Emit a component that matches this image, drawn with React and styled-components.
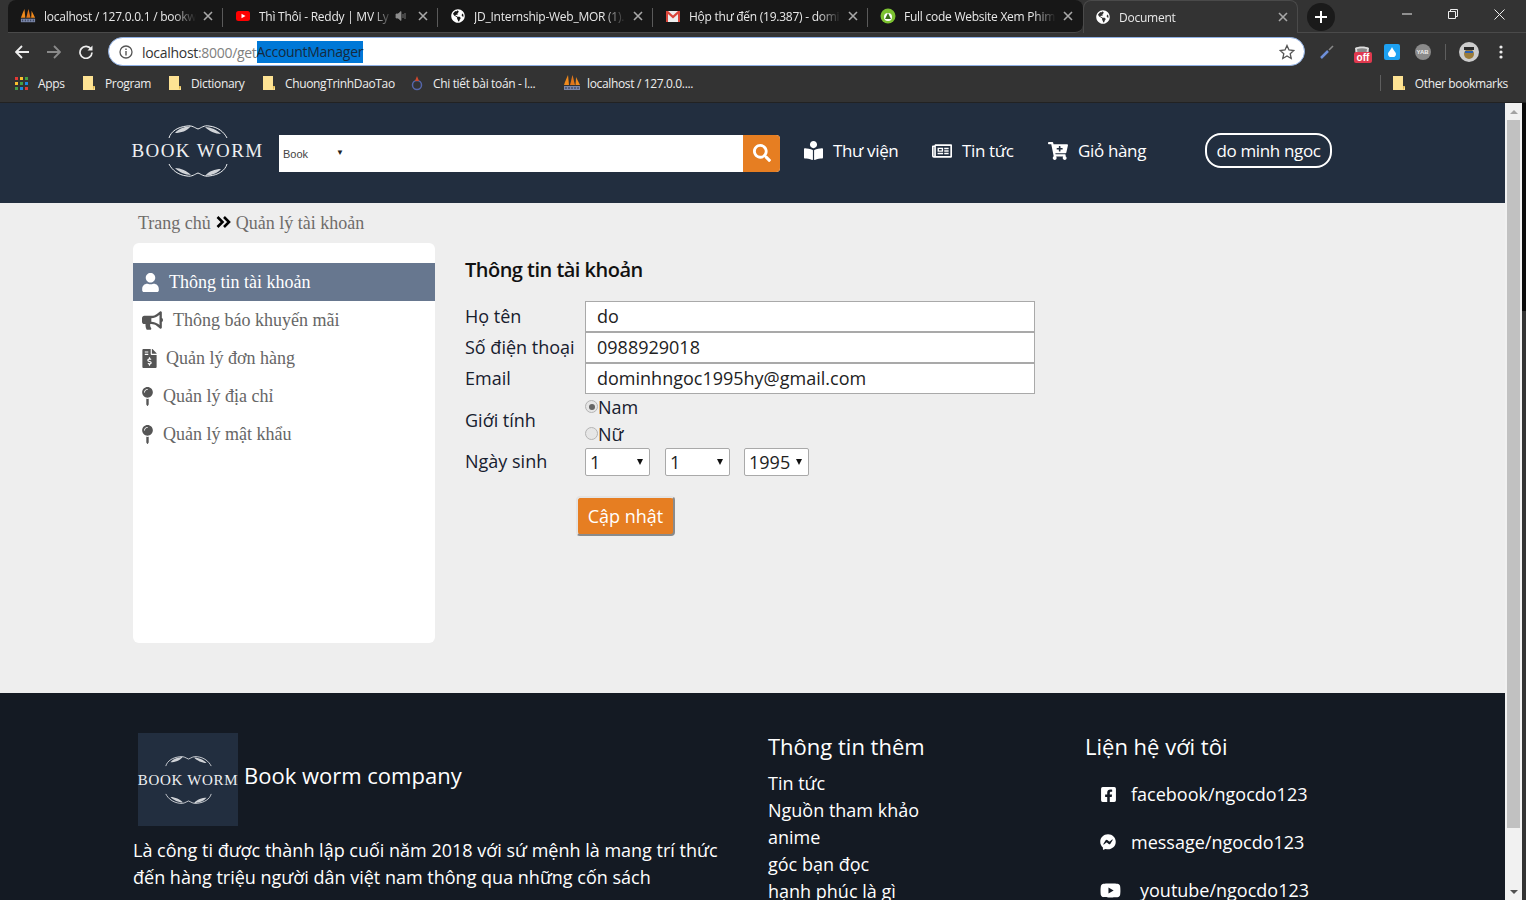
import React from 'react';
import styled, { createGlobalStyle } from 'styled-components';
import {
  FaUser, FaBullhorn, FaFileInvoiceDollar, FaMapPin, FaBookReader, FaRegNewspaper, FaCartPlus,
  FaFacebookSquare, FaFacebookMessenger, FaYoutube, FaSearch, FaGlobeAmericas,
} from 'react-icons/fa';

const Global = createGlobalStyle`
  html, body { margin: 0; padding: 0; height: 900px; overflow: hidden; background: #333; }
  * { box-sizing: border-box; }
`;

const Shell = styled.div`
  width: 1526px; height: 900px; display: flex; flex-direction: column; overflow: hidden;
  font-family: "Open Sans", "Noto Sans", sans-serif;
`;

/* ---------- browser chrome ---------- */
const TabStrip = styled.div`
  height: 33px; flex: none; display: flex; background: #333; padding-left: 8px; position: relative;
  color: #e8e8e8; font-size: 12px; letter-spacing: -0.25px;
`;
const Tab = styled.div`
  width: 215px; height: 33px; display: flex; align-items: center; padding: ${p => (p.$active ? '0 6px 0 11px' : '0 7px 0 12px')};
  flex: none; position: relative;
  background: ${p => (p.$active ? '#333' : '#171717')};
  border-radius: ${p => (p.$active ? '8px 8px 0 0' : '0')};
  ${p => (p.$active ? 'border: 1px solid #4a4a4a; border-bottom: none;' : 'border-bottom: 1px solid #4a4a4a;')}
  ${p => (p.$first ? 'border-top-left-radius: 8px;' : '')}
  ${p => (p.$last ? 'border-top-right-radius: 8px; border-bottom-right-radius: 8px;' : '')}
`;
const TabSep = styled.span`
  position: absolute; right: 0; top: 8px; width: 1px; height: 19px; background: #5a5a5a;
`;
const Fav = styled.span`
  width: 16px; height: 16px; flex: none; display: flex; align-items: center; justify-content: center; color: #fff;
`;
const TabTitle = styled.span`
  margin-left: 8px; flex: 1; min-width: 0; white-space: nowrap; overflow: hidden;
  -webkit-mask-image: linear-gradient(to right, #000 85%, transparent 100%);
  mask-image: linear-gradient(to right, #000 85%, transparent 100%);
`;
const TabClose = styled.span`
  width: 16px; flex: none; display: flex; justify-content: center; margin-left: 4px;
`;
const Speaker = styled.svg`
  width: 12px; height: 12px; flex: none; margin-left: 2px; margin-right: 4px;
`;
const NewTab = styled.div`
  width: 28px; height: 28px; border-radius: 50%; background: #1a1a1a; margin: 3px 0 0 9px;
  display: flex; align-items: center; justify-content: center;
`;
const WindowControls = styled.div`
  margin-left: auto; margin-right: 4px; display: flex; width: 138px; height: 28px;
  align-items: center;
`;
const WinBtn = styled.div`
  width: 46px; height: 28px; display: flex; align-items: center; justify-content: center;
`;
const StripEnd = styled.div`
  flex: 1; height: 33px; display: flex; border-bottom: 1px solid #4a4a4a;
`;

const Toolbar = styled.div`
  height: 37px; flex: none; background: #333; display: flex; align-items: center; padding-left: 8px;
`;
const NavBtn = styled.div`
  width: 28px; height: 28px; margin-right: 4px; display: flex; align-items: center; justify-content: center;
`;
const Omni = styled.div`
  width: 1197px; height: 29px; margin-left: 4px; flex: none; background: #fff; border-radius: 15px;
  border: 1px solid #8fb0e4; display: flex; align-items: center; padding: 1px 9px 0 10px;
  font-size: 14px; letter-spacing: -0.3px; color: #333;
`;
const UrlHost = styled.span`
  margin-left: 9px;
`;
const UrlMuted = styled.span`
  color: #808080;
`;
const UrlSelected = styled.span`
  background: #0078d7; color: #152a3e; line-height: 22px; height: 22px;
`;
const StarWrap = styled.span`
  margin-left: auto; display: flex;
`;
const Extensions = styled.div`
  display: flex; align-items: center; height: 28px; margin-left: 12px; flex: 1;
`;
const ExtSlot = styled.div`
  width: ${p => p.$w}px; padding-left: ${p => p.$pl || 0}px; flex: none; display: flex; align-items: center; justify-content: center; position: relative; height: 28px;
`;
const OffBadge = styled.span`
  position: absolute; left: 17px; top: 14px; height: 11px; width: 18px; background: #e0394e; border-radius: 2px;
  font: bold 10px/11px "Liberation Sans", sans-serif; color: #fff; text-align: center;
`;
const DropBox = styled.span`
  width: 16px; height: 16px; flex: none; border-radius: 2px; background: #1da1f2; display: flex; align-items: center; justify-content: center;
`;
const YabDot = styled.span`
  width: 16px; height: 16px; flex: none; border-radius: 50%; background: #8a8a8a; color: #eee;
  font: bold 6px/16px "Liberation Sans", sans-serif; text-align: center;
`;
const ToolSep = styled.span`
  width: 1px; height: 16px; background: #5e5e5e; flex: none;
`;
const Avatar = styled.span`
  width: 20px; height: 20px; flex: none; border-radius: 50%; background: #ccc; overflow: hidden; display: block;
`;

const Bookmarks = styled.div`
  height: 33px; flex: none; background: #333; border-bottom: 1px solid #222; display: flex; align-items: center;
  padding: 0 18px 6px 15px; color: #eee; font-size: 12px; letter-spacing: -0.35px; white-space: nowrap;
`;
const Bookmark = styled.div`
  display: flex; align-items: center; width: ${p => p.$w}px; flex: none;
`;
const BmLabel = styled.span`
  margin-left: ${p => p.$gap || 10}px;
`;
const BmRight = styled.div`
  margin-left: auto; display: flex; align-items: center;
`;
const BmSep = styled.span`
  width: 1px; height: 16px; background: #5e5e5e; margin-right: 12px;
`;

/* ---------- viewport ---------- */
const Viewport = styled.div`
  flex: 1; min-height: 0; display: flex; overflow: hidden;
`;
const Page = styled.div`
  width: 1505px; flex: none; background: #eee; overflow: hidden; display: flex; flex-direction: column;
`;
const Scrollbar = styled.div`
  width: 17px; flex: none; background: #f1f1f1; display: flex; flex-direction: column; align-items: center;
`;
const ScrollBtn = styled.div`
  height: 17px; width: 100%; flex: none; display: flex; align-items: center; justify-content: center;
`;
const Thumb = styled.div`
  width: 13px; margin: 0 auto; height: 708px; flex: none; background: #c1c1c1;
`;
const ScrollFill = styled.div`
  flex: 1;
`;
const ArrowUp = styled.span`
  width: 0; height: 0; border-left: 4px solid transparent; border-right: 4px solid transparent;
  border-bottom: 4px solid #a3a3a3;
`;
const ArrowDown = styled.span`
  width: 0; height: 0; border-left: 4px solid transparent; border-right: 4px solid transparent;
  border-top: 4px solid #505050;
`;
const EdgeStrip = styled.div`
  width: 4px; flex: none; background: linear-gradient(to bottom, #0a0a0a 0, #0a0a0a 208px, #333 208px);
`;

/* ---------- site header ---------- */
const Header = styled.header`
  height: 100px; flex: none; background: #222e3f; display: flex; align-items: center; padding-left: 132px; color: #fff;
`;
const LogoBox = styled.div`
  width: ${p => p.$w}px; margin-bottom: ${p => p.$mb || 0}px; flex: none; display: flex; flex-direction: column; align-items: center; color: #eef0f2;
`;
const Wreath = styled.svg`
  width: ${p => p.$w}px; height: ${p => p.$h}px; display: block; flex: none;
  ${p => (p.$flip ? 'transform: scale(-1, -1);' : '')}
`;
const LogoText = styled.span`
  font-family: "Liberation Serif", serif; font-size: ${p => p.$size}px; line-height: ${p => p.$lh}px;
  letter-spacing: ${p => p.$ls}px; margin: ${p => p.$gap}px 0; white-space: nowrap;
`;
const SearchBar = styled.div`
  width: 501px; height: 37px; margin-left: 16px; flex: none; background: #fff; display: flex; align-items: stretch; border-radius: 0 4px 4px 0;
`;
const SearchSelect = styled.div`
  width: 68px; display: flex; align-items: center; padding-left: 4px; font: 11px "Liberation Sans", sans-serif; color: #444; margin-top: 1px;
`;
const SmallCaret = styled.span`
  font-size: 8px; color: #222; margin-left: 28px; margin-top: -3px;
`;
const SearchInput = styled.div`
  flex: 1;
`;
const SearchBtn = styled.div`
  width: 37px; background: #e67e22; border-radius: 0 4px 4px 0; display: flex; align-items: center; justify-content: center; color: #fff;
`;
const HeaderNav = styled.nav`
  display: flex; margin: 0 0 5px 24px; align-items: center; height: 35px;
`;
const NavItem = styled.div`
  display: flex; align-items: center; width: ${p => p.$w}px; font-size: 17px; letter-spacing: -0.35px; color: #fff; white-space: nowrap;
`;
const NavIcon = styled.span`
  width: ${p => p.$w}px; flex: none; display: flex;
`;
const UserPill = styled.div`
  margin: 0 0 6px 41px; width: 127px; height: 35px; border: 2px solid #fff; border-radius: 16px; display: flex; align-items: center; justify-content: center;
  font-size: 17px; letter-spacing: -0.35px; white-space: nowrap;
`;

/* ---------- main ---------- */
const Crumbs = styled.div`
  height: 40px; flex: none; padding-left: 138px; display: flex; align-items: center;
  font-family: "Liberation Serif", serif; font-size: 18px; color: #6f6c6a; gap: 5px;
`;
const CrumbSep = styled.svg`
  width: 15px; height: 12px; flex: none; margin-top: -3px;
`;
const Main = styled.main`
  height: 450px; flex: none; display: flex; padding-left: 133px; align-items: flex-start;
`;
const Sidebar = styled.aside`
  width: 302px; height: 400px; flex: none; background: #fff; border-radius: 6px; padding-top: 20px;
`;
const SideItem = styled.div`
  height: 38px; display: flex; align-items: center; padding-left: 9px;
  font-family: "Liberation Serif", serif; font-size: 18px; white-space: nowrap;
  background: ${p => (p.$active ? '#67778f' : 'transparent')};
  color: ${p => (p.$active ? '#fff' : '#666')};
`;
const SideIcon = styled.span`
  width: ${p => p.$w}px; flex: none; display: flex; align-items: center;
  color: ${p => (p.$active ? '#fff' : '#555')};
  & > svg { flex: none; margin-left: ${p => p.$shift || 0}px; }
`;
const Content = styled.section`
  margin-left: 30px; width: 570px; color: #17202e;
`;
const Title = styled.h2`
  margin: 13px 0 18px; font-size: 20px; line-height: 27px; font-weight: 600; color: #111; letter-spacing: -0.52px;
`;
const FormRow = styled.div`
  display: flex; align-items: center; min-height: ${p => p.$h || 31}px; font-size: 18px;
`;
const Label = styled.div`
  width: 120px; flex: none; white-space: nowrap; color: #17202e; padding-bottom: 2px;
`;
const Field = styled.div`
  width: 450px; height: 31px; border: 1px solid #a9a9a9; background: #fff; padding-left: 11px; line-height: 29px; font-size: 18px; color: #222;
`;
const RadioCol = styled.div`
  display: flex; flex-direction: column; margin-top: -2px;
`;
const RadioLine = styled.label`
  display: flex; align-items: center; height: 27px; font-size: 18px;
`;
const RadioMark = styled.span`
  width: 13px; height: 13px; border-radius: 50%; border: 1px solid #b4b4b4; background: #e6e6e6; display: flex; align-items: center; justify-content: center;
  &::after { content: ''; width: 6px; height: 6px; border-radius: 50%; background: ${p => (p.$on ? '#666' : 'transparent')}; }
`;
const DateRow = styled.div`
  display: flex; align-items: center;
`;
const Select = styled.div`
  width: ${p => p.$w}px; height: 28px; background: #fff; border: 1px solid #a9a9a9; border-radius: 2px; margin-right: ${p => p.$mr}px;
  display: flex; align-items: center; justify-content: space-between; padding: 0 5px 0 4px; font-size: 18px; color: #222;
`;
const TinyCaret = styled.span`
  width: 0; height: 0; border-left: 3px solid transparent; border-right: 3px solid transparent; border-top: 6px solid #111; margin-right: 1px;
`;
const SubmitRow = styled.div`
  padding: 21px 0 0 111px;
`;
const Submit = styled.div`
  width: 99px; height: 40px; margin-top: -1px; background: #e67e22; color: #fff; font-size: 18px; display: flex; align-items: center; justify-content: center;
  border-radius: 4px; border: 2px solid #e4e4e4; border-right-color: #8a8a8a; border-bottom-color: #8a8a8a;
`;

/* ---------- footer ---------- */
const Footer = styled.footer`
  flex: 1; background: #141a23; color: #fff; display: flex; padding: 40px 0 0 133px; overflow: hidden;
`;
const FootAbout = styled.div`
  width: 635px; flex: none;
`;
const Brand = styled.div`
  display: flex; padding-left: 5px; align-items: flex-start;
`;
const BrandSquare = styled.div`
  width: 100px; height: 93px; background: #222e3f; display: flex; align-items: center; justify-content: center; flex: none;
`;
const BrandName = styled.div`
  margin: 26px 0 0 6px; font-size: 22px; line-height: 32px;
`;
const About = styled.p`
  margin: 11px 0 0; width: 600px; font-size: 18px; line-height: 27px;
`;
const FootCol = styled.div`
  width: ${p => p.$w}px; flex: none;
`;
const FootHead = styled.h3`
  margin: -2px 0 0; font-size: 22px; font-weight: 400; line-height: 30px;
`;
const FootLinks = styled.div`
  margin-top: 9px; display: flex; flex-direction: column; font-size: 18px; line-height: 27px;
`;
const Contacts = styled.div`
  margin-top: 9px; display: flex; flex-direction: column; padding-left: 15px;
`;
const Contact = styled.div`
  height: 48px; display: flex; align-items: center; font-size: 18px; white-space: nowrap;
`;
const ContactIcon = styled.span`
  width: ${p => p.$w}px; flex: none; display: flex;
`;

/* ---------- drawings ---------- */
const Pma = ({ size = 16 }) => (
  <svg width={size + 2} height={size} viewBox="0 0 18 16">
    <path d="M1 10 C2 7 3.500 3 5 0 L6 10 Z" fill="#f08a1d" />
    <path d="M7 10 C8 7 8.500 3 9.500 0 C10.500 3 11 7 12 10 Z" fill="#e0761a" />
    <path d="M12.500 10 C12.800 7 13 4 13 2 L17 10 Z" fill="#f08a1d" />
    <rect x="1" y="11" width="16" height="4" fill="#7a86a8" />
    <path d="M3 12 V14 M6 12 V14 M9 12 V14 M12 12 V14 M15 12 V14" stroke="#2c3550" strokeWidth="1" />
  </svg>
);
const YouTubeFav = () => (
  <svg width="14" height="10" viewBox="0 0 14 10">
    <rect width="14" height="10" rx="2.5" fill="#f00" />
    <path d="M5.5 2.8 L9.5 5 L5.5 7.2 Z" fill="#fff" />
  </svg>
);
const GmailFav = () => (
  <svg width="14" height="11" viewBox="0 0 14 11">
    <rect width="14" height="11" fill="#eee" />
    <path d="M0 0 H2 L7 4.5 L12 0 H14 V11 H12 V3 L7 7.5 L2 3 V11 H0 Z" fill="#d9453a" />
  </svg>
);
const GreenFav = () => (
  <svg width="16" height="16" viewBox="0 0 16 16">
    <circle cx="8" cy="8" r="7.5" fill="#7cc231" />
    <circle cx="8" cy="9" r="4" fill="#fff" />
    <path d="M8 5 L11 11 H5 Z" fill="#3c6e1c" />
  </svg>
);
const X = ({ c = '#a8a8a8' }) => (
  <svg width="10" height="10" viewBox="0 0 10 10"><path d="M1 1 L9 9 M9 1 L1 9" stroke={c} strokeWidth="1.6" /></svg>
);
const Folder = () => (
  <svg width="12" height="14" viewBox="0 0 12 14">
    <path d="M0 0 H10 V10 H12 V14 H0 Z" fill="#fde293" />
    <path d="M10 10 H12 L10 14 Z" fill="#d9b24c" />
  </svg>
);
const Wr = ({ w, h, flip }) => (
  <Wreath $w={w} $h={h} $flip={flip} viewBox="0 0 60 15">
    <path d="M1 14 C3 7 10 3 19 2 C24 1 27 4 30 5 C33 4 36 1 41 2 C50 3 56 8 59 14" fill="none" stroke="currentColor" strokeWidth="1" />
    <path d="M7 9 C11 4 17 3 23 2 C19 7 13 9 7 9 Z M37 3 C43 3 49 6 53 10 C47 10 41 7 37 3 Z" fill="currentColor" opacity="0.85" />
  </Wreath>
);
const Logo = ({ w, wr, wrh, size, lh, ls, gap, mb }) => (
  <LogoBox $w={w} $mb={mb}>
    <Wr w={wr} h={wrh} />
    <LogoText $size={size} $lh={lh} $ls={ls} $gap={gap}>BOOK WORM</LogoText>
    <Wr w={wr} h={wrh} flip />
  </LogoBox>
);

const tabs = [
  { fav: <Pma />, title: 'localhost / 127.0.0.1 / bookw', first: true },
  { fav: <YouTubeFav />, title: 'Thì Thôi - Reddy | MV Ly', audio: true },
  { fav: <FaGlobeAmericas size={14} />, title: 'JD_Internship-Web_MOR (1).' },
  { fav: <GmailFav />, title: 'Hộp thư đến (19.387) - domi' },
  { fav: <GreenFav />, title: 'Full code Website Xem Phim', last: true },
];

export default function App() {
  return (
    <Shell>
      <Global />
      <TabStrip>
        {tabs.map((t) => (
          <Tab key={t.title} $first={t.first} $last={t.last}>
            <Fav>{t.fav}</Fav>
            <TabTitle>{t.title}</TabTitle>
            {t.audio && (
              <Speaker viewBox="0 0 12 12"><path d="M1 4 H3 L6 1.5 V10.5 L3 8 H1 Z M8 4 V8 M10 3 V9" fill="#8d8d8d" stroke="#8d8d8d" strokeWidth="0.8" /></Speaker>
            )}
            <TabClose><X /></TabClose>
            {!t.last && <TabSep />}
          </Tab>
        ))}
        <Tab $active>
          <Fav><FaGlobeAmericas size={14} /></Fav>
          <TabTitle>Document</TabTitle>
          <TabClose><X /></TabClose>
        </Tab>
        <StripEnd>
          <NewTab>
            <svg width="12" height="12" viewBox="0 0 12 12"><path d="M6 0 V12 M0 6 H12" stroke="#fff" strokeWidth="2" /></svg>
          </NewTab>
          <WindowControls>
            <WinBtn><svg width="10" height="10" viewBox="0 0 10 10"><path d="M0 5 H10" stroke="#eee" strokeWidth="1" /></svg></WinBtn>
            <WinBtn><svg width="10" height="10" viewBox="0 0 10 10"><path d="M.5 2.5 H7.5 V9.5 H.5 Z M2.5 2.5 V.5 H9.5 V7.5 H7.5" fill="none" stroke="#eee" strokeWidth="1" /></svg></WinBtn>
            <WinBtn><svg width="11" height="11" viewBox="0 0 11 11"><path d="M.5 .5 L10.5 10.5 M10.5 .5 L.5 10.5" stroke="#eee" strokeWidth="1" /></svg></WinBtn>
          </WindowControls>
        </StripEnd>
      </TabStrip>

      <Toolbar>
        <NavBtn><svg width="14" height="14" viewBox="0 0 14 14"><path d="M14 7 H1.5 M7 1 L1 7 L7 13" fill="none" stroke="#eee" strokeWidth="1.8" /></svg></NavBtn>
        <NavBtn><svg width="14" height="14" viewBox="0 0 14 14"><path d="M0 7 H12.5 M7 1 L13 7 L7 13" fill="none" stroke="#8a8a8a" strokeWidth="1.8" /></svg></NavBtn>
        <NavBtn><svg width="14" height="14" viewBox="0 0 14 14"><path d="M12 4 A6 6 0 1 0 13 7.5" fill="none" stroke="#eee" strokeWidth="1.7" /><path d="M13.5 .5 V5.5 H8.5 Z" fill="#eee" /></svg></NavBtn>
        <Omni>
          <svg width="14" height="14" viewBox="0 0 14 14"><circle cx="7" cy="7" r="6" fill="none" stroke="#555" strokeWidth="1.3" /><path d="M7 6 V10.5 M7 3.5 V5" stroke="#555" strokeWidth="1.4" /></svg>
          <UrlHost>localhost</UrlHost><UrlMuted>:8000/get</UrlMuted><UrlSelected>AccountManager</UrlSelected>
          <StarWrap><svg width="16" height="16" viewBox="0 0 16 16"><path d="M8 1.5 L10 6 L14.8 6.5 L11.2 9.7 L12.2 14.5 L8 12 L3.8 14.5 L4.8 9.7 L1.2 6.5 L6 6 Z" fill="none" stroke="#555" strokeWidth="1.3" /></svg></StarWrap>
        </Omni>
        <Extensions>
          <ExtSlot $w={20}><svg width="16" height="16" viewBox="0 0 16 16"><path d="M2 14 L9 7" stroke="#6e8fd8" strokeWidth="2.5" /><path d="M10 6 L14 2" stroke="#888" strokeWidth="1.6" /></svg></ExtSlot>
          <ExtSlot $w={50}>
            <svg width="16" height="14" viewBox="0 0 16 14"><path d="M1 3 C4 1 12 1 15 3 L14 12 H2 Z" fill="#ddd" /><path d="M3 4 C6 3 10 3 13 4 L12 11 H4 Z" fill="#888" /></svg>
            <OffBadge>off</OffBadge>
          </ExtSlot>
          <ExtSlot $w={9}><DropBox><svg width="8" height="10" viewBox="0 0 8 10"><path d="M4 0 C5 3 8 5 8 7 A4 3.4 0 0 1 0 7 C0 5 3 3 4 0 Z" fill="#fff" /></svg></DropBox></ExtSlot>
          <ExtSlot $w={49} $pl={4}><YabDot>YAB</YabDot></ExtSlot>
          <ToolSep />
          <ExtSlot $w={45}>
            <Avatar>
              <svg width="20" height="20" viewBox="0 0 20 20"><circle cx="10" cy="12" r="5" fill="#9a7b3a" /><rect x="5" y="5" width="10" height="3" fill="#2a2a2a" /><rect x="6" y="9" width="8" height="2" fill="#2b5fb0" /></svg>
            </Avatar>
          </ExtSlot>
          <ExtSlot $w={20}>
            <svg width="4" height="14" viewBox="0 0 4 14"><circle cx="2" cy="2" r="1.6" fill="#eee" /><circle cx="2" cy="7" r="1.6" fill="#eee" /><circle cx="2" cy="12" r="1.6" fill="#eee" /></svg>
          </ExtSlot>
        </Extensions>
      </Toolbar>

      <Bookmarks>
        <Bookmark $w={68}>
          <svg width="13" height="13" viewBox="0 0 13 13">
            {[0, 5, 10].map((y, r) => [0, 5, 10].map((x, c) => (
              <rect key={`${r}${c}`} x={x} y={y} width="3" height="3" fill={['#e53935', '#fbc02d', '#43a047', '#1e88e5'][(r + c) % 4]} />
            )))}
          </svg>
          <BmLabel>Apps</BmLabel>
        </Bookmark>
        <Bookmark $w={86}><Folder /><BmLabel>Program</BmLabel></Bookmark>
        <Bookmark $w={94}><Folder /><BmLabel>Dictionary</BmLabel></Bookmark>
        <Bookmark $w={148}><Folder /><BmLabel>ChuongTrinhDaoTao</BmLabel></Bookmark>
        <Bookmark $w={152}>
          <svg width="12" height="16" viewBox="0 0 12 16"><circle cx="6" cy="10" r="4.5" fill="none" stroke="#5566aa" strokeWidth="1.5" /><path d="M6 1 L8 6 H4 Z" fill="#d0492e" /></svg>
          <BmLabel>Chi tiết bài toán - l...</BmLabel>
        </Bookmark>
        <Bookmark $w={150}><Pma /><BmLabel $gap={6}>localhost / 127.0.0....</BmLabel></Bookmark>
        <BmRight>
          <BmSep />
          <Folder />
          <BmLabel>Other bookmarks</BmLabel>
        </BmRight>
      </Bookmarks>

      <Viewport>
        <Page>
          <Header>
            <Logo w={131} wr={60} wrh={15} size={19} lh={22} ls={1.4} gap={1} mb={4} />
            <SearchBar>
              <SearchSelect>Book<SmallCaret>▼</SmallCaret></SearchSelect>
              <SearchInput />
              <SearchBtn><FaSearch size={18} /></SearchBtn>
            </SearchBar>
            <HeaderNav>
              <NavItem $w={128}><NavIcon $w={29}><FaBookReader size={19} /></NavIcon>Thư viện</NavItem>
              <NavItem $w={116}><NavIcon $w={30}><FaRegNewspaper size={20} /></NavIcon>Tin tức</NavItem>
              <NavItem $w={116}><NavIcon $w={30}><FaCartPlus size={20} /></NavIcon>Giỏ hàng</NavItem>
            </HeaderNav>
            <UserPill>do minh ngoc</UserPill>
          </Header>

          <Crumbs>
            Trang chủ
            <CrumbSep viewBox="0 0 15 12"><path d="M1.5 1 L6.5 6 L1.5 11 M8 1 L13 6 L8 11" fill="none" stroke="#000" strokeWidth="2.6" /></CrumbSep>
            Quản lý tài khoản
          </Crumbs>

          <Main>
            <Sidebar>
              <SideItem $active><SideIcon $w={27} $active $shift={-1}><FaUser size={19} /></SideIcon>Thông tin tài khoản</SideItem>
              <SideItem><SideIcon $w={31}><FaBullhorn size={21} /></SideIcon>Thông báo khuyến mãi</SideItem>
              <SideItem><SideIcon $w={24} $shift={-2}><FaFileInvoiceDollar size={19} /></SideIcon>Quản lý đơn hàng</SideItem>
              <SideItem><SideIcon $w={21} $shift={-4}><FaMapPin size={19} /></SideIcon>Quản lý địa chỉ</SideItem>
              <SideItem><SideIcon $w={21} $shift={-4}><FaMapPin size={19} /></SideIcon>Quản lý mật khẩu</SideItem>
            </Sidebar>
            <Content>
              <Title>Thông tin tài khoản</Title>
              <FormRow><Label>Họ tên</Label><Field>do</Field></FormRow>
              <FormRow><Label>Số điện thoại</Label><Field>0988929018</Field></FormRow>
              <FormRow><Label>Email</Label><Field>dominhngoc1995hy@gmail.com</Field></FormRow>
              <FormRow $h={54}>
                <Label>Giới tính</Label>
                <RadioCol>
                  <RadioLine><RadioMark $on />Nam</RadioLine>
                  <RadioLine><RadioMark />Nữ</RadioLine>
                </RadioCol>
              </FormRow>
              <FormRow $h={28}>
                <Label>Ngày sinh</Label>
                <DateRow>
                  <Select $w={65} $mr={15}>1<TinyCaret /></Select>
                  <Select $w={65} $mr={14}>1<TinyCaret /></Select>
                  <Select $w={65} $mr={0}>1995<TinyCaret /></Select>
                </DateRow>
              </FormRow>
              <SubmitRow><Submit>Cập nhật</Submit></SubmitRow>
            </Content>
          </Main>

          <Footer>
            <FootAbout>
              <Brand>
                <BrandSquare>
                  <Logo w={100} wr={47} wrh={12} size={15} lh={18} ls={0.7} gap={4} />
                </BrandSquare>
                <BrandName>Book worm company</BrandName>
              </Brand>
              <About>Là công ti được thành lập cuối năm 2018 với sứ mệnh là mang trí thức đến hàng triệu người dân việt nam thông qua những cốn sách</About>
            </FootAbout>
            <FootCol $w={317}>
              <FootHead>Thông tin thêm</FootHead>
              <FootLinks>
                <span>Tin tức</span>
                <span>Nguồn tham khảo</span>
                <span>anime</span>
                <span>góc bạn đọc</span>
                <span>hạnh phúc là gì</span>
              </FootLinks>
            </FootCol>
            <FootCol $w={400}>
              <FootHead>Liện hệ với tôi</FootHead>
              <Contacts>
                <Contact><ContactIcon $w={31}><FaFacebookSquare size={17} /></ContactIcon>facebook/ngocdo123</Contact>
                <Contact><ContactIcon $w={31}><FaFacebookMessenger size={16} /></ContactIcon>message/ngocdo123</Contact>
                <Contact><ContactIcon $w={40}><FaYoutube size={21} /></ContactIcon>youtube/ngocdo123</Contact>
              </Contacts>
            </FootCol>
          </Footer>
        </Page>
        <Scrollbar>
          <ScrollBtn><ArrowUp /></ScrollBtn>
          <Thumb />
          <ScrollFill />
          <ScrollBtn><ArrowDown /></ScrollBtn>
        </Scrollbar>
        <EdgeStrip />
      </Viewport>
    </Shell>
  );
}
